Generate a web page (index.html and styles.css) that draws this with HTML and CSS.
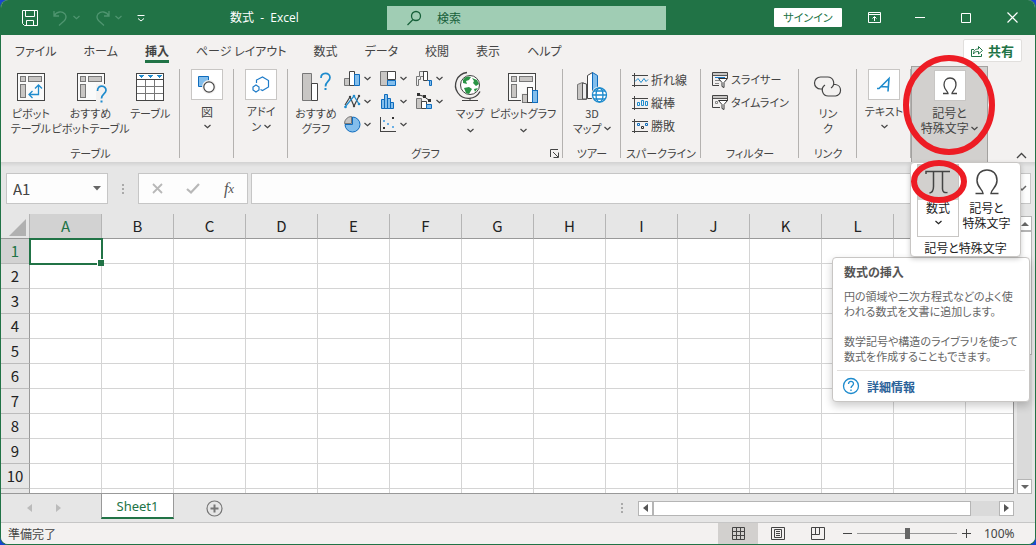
FILE: index.html
```html
<!DOCTYPE html>
<html lang="ja">
<head>
<meta charset="utf-8">
<title>数式 - Excel</title>
<link rel="stylesheet" href="styles.css">
</head>
<body>
<svg width="0" height="0" class="defs" aria-hidden="true">
  <symbol id="chev" viewBox="0 0 7 5"><path d="M.5 1l3 2.800L6.500 1" fill="none" stroke="currentColor" stroke-width="1.200"/></symbol>
</svg>
<div class="window">
  <header class="titlebar">
    <div class="quick">
      <button aria-label="保存"><svg width="16" height="16" fill="none" stroke="#fff"><path d="M.5.5h15v15h-13l-2-2zM3.500.5v6h9v-6M4.500 15.500v-5h7v5"/></svg></button>
      <button class="dim" aria-label="元に戻す"><svg width="15" height="16" fill="none" stroke="currentColor" stroke-width="1.300"><path d="M1 1v5h5M1 6c3-5 8-5 11-2 2 3 1 5-1 7l-5 4.500"/></svg><svg width="7" height="5"><use href="#chev"/></svg></button>
      <button class="dim" aria-label="やり直し"><svg width="15" height="16" fill="none" stroke="currentColor" stroke-width="1.300"><path d="M14 1v5H9M14 6C11 1 6 1 3 4 1 7 2 9 4 11l5 4.500"/></svg><svg width="7" height="5"><use href="#chev"/></svg></button>
      <button aria-label="カスタマイズ"><svg width="8" height="8" fill="none" stroke="#fff"><path d="M.5 1.500h7M1 4.500l3 2.500 3-2.500"/></svg></button>
    </div>
    <h1 class="doc">数式&nbsp; -&nbsp; Excel</h1>
    <label class="search"><svg width="15" height="16" fill="none" stroke="#17603a" stroke-width="1.300"><circle cx="9" cy="6" r="4.500"/><path d="M6 9.500L.5 15"/></svg><input type="text" placeholder="検索" aria-label="検索"></label>
    <div class="wincontrols">
      <button class="signin">サインイン</button>
      <button aria-label="リボンの表示"><svg width="13" height="11" fill="none" stroke="#fff"><path d="M.5.500h12v10H.5zM.5 2.500h12M6.500 9V5M4.500 6.500l2-2 2 2"/></svg></button>
      <button aria-label="最小化"><svg width="10" height="10" stroke="#fff"><path d="M0 4.500h10"/></svg></button>
      <button aria-label="最大化"><svg width="10" height="10" fill="none" stroke="#fff"><path d="M.5.500h9v9h-9z"/></svg></button>
      <button aria-label="閉じる"><svg width="11" height="11" stroke="#fff" stroke-width="1.200"><path d="M.5.500l10 10M10.500.500l-10 10"/></svg></button>
    </div>
  </header>

  <nav class="tabs">
    <button>ファイル</button><button>ホーム</button><button class="current">挿入</button><button>ページ レイアウト</button><button>数式</button><button>データ</button><button>校閲</button><button>表示</button><button>ヘルプ</button>
    <button class="share"><svg width="12" height="12" fill="none" stroke="#217346"><path d="M3 4.500H.5v7h10V9M2.500 9c0-4 2-5 5-5V1.500l4 4-4 3.500V6.500c-2.500 0-4 .5-5 2.500z"/></svg>共有</button>
  </nav>

  <section class="ribbon">
    <div class="group g-tables">
      <div class="items">
        <button class="big"><svg width="28" height="32"><g shape-rendering="crispEdges"><path d="M.5 2.500h27v27H.5z" fill="#fafafa" stroke="#444"/><path d="M3.500 5.500h5v5h-5zM11.500 5.500h13v5h-13zM3.500 13.500h5v13h-5z" fill="#c8c6c4" stroke="#777"/></g><path d="M12 23.500h9.500V14M15.500 20l-3.500 3.500 3.500 3.500M18 17.500l3.500-3.500 3.500 3.500" fill="none" stroke="#1e8bcd" stroke-width="1.300"/></svg><span>ピボット<br>テーブル</span></button>
        <button class="big"><svg width="32" height="32"><g shape-rendering="crispEdges"><path d="M2.500 2.500h27v27h-27z" fill="#fafafa" stroke="#444"/><path d="M5.500 5.500h5v5h-5zM13.500 5.500h13v5h-13zM5.500 13.500h5v13h-5z" fill="#c8c6c4" stroke="#777"/><path d="M21 13h11v19H21z" fill="#f3f1f0"/></g><path d="M22.500 20c0-7 9-6 8.500-.5-.3 3.500-4.500 3.500-4.500 8" fill="none" stroke="#1e8bcd" stroke-width="1.700"/><path d="M25.500 29.500h2v2h-2z" fill="#1e8bcd"/></svg><span>おすすめ<br>ピボットテーブル</span></button>
        <button class="big"><svg width="28" height="32" shape-rendering="crispEdges"><path d="M.5 2.500h27v27H.5z" fill="#fff" stroke="#444"/><path d="M1 8.500h26" stroke="#444"/><path d="M1 15.500h26M1 22.500h26M9.500 9v20M18.500 9v20" stroke="#777"/><path d="M2 4h6L5 7zM11 4h6l-3 3zM20 4h6l-3 3z" fill="#1e8bcd"/></svg><span>テーブル</span></button>
      </div>
      <h2>テーブル</h2>
    </div>
    <div class="group g-narrow"><button class="boxed"><span class="tile"><svg width="18" height="18"><path d="M.5.500h10v10H.5z" fill="#83beec" stroke="#0f6cbd"/><circle cx="11" cy="11" r="7" fill="#f3f1f0"/><circle cx="11" cy="11" r="5.200" fill="#fff" stroke="#444" stroke-width="1.200"/></svg></span><span>図</span><svg class="cv"><use href="#chev"/></svg></button></div>
    <div class="group g-narrow"><button class="boxed kana"><span class="tile"><svg width="18" height="18" fill="none" stroke="#1e7bc8" stroke-width="1.200"><path d="M4.500 7V4l6-3 6 3.500v6.500l-6 3.500-2-1"/><path d="M4 9l3 2v3l-3 2-3-2v-3z"/></svg></span><span>アドイ<br>ン <svg class="cv in"><use href="#chev"/></svg></span></button></div>

    <div class="group g-charts">
      <div class="items">
        <button class="big rec"><svg width="30" height="32"><path d="M1.500 2.500h9v27h-9z" fill="#c8c6c4" stroke="#777"/><path d="M10.500 12.500h6v17h-6z" fill="#fff" stroke="#444"/><path d="M20 7c0-6 9-6 9-.5 0 4-4.500 4-4.500 9" fill="none" stroke="#1e8bcd" stroke-width="1.700"/><path d="M23.500 17h2v2h-2z" fill="#1e8bcd"/></svg><span>おすすめ<br>グラフ</span></button>
        <div class="minis">
          <button aria-label="縦棒グラフ"><svg width="17" height="17"><path d="M.5 8.500h5v7h-5z" fill="#c8c6c4" stroke="#777"/><path d="M5.500 1.500h5v14h-5z" fill="#fff" stroke="#444"/><path d="M10.500 4.500h5v11h-5z" fill="#83beec" stroke="#0f6cbd"/></svg><svg class="cv"><use href="#chev"/></svg></button>
          <button aria-label="階層構造グラフ"><svg width="17" height="17"><path d="M.5 1.500h7v14h-7z" fill="#c8c6c4" stroke="#777"/><path d="M7.500 1.500h8v8h-8z" fill="#fff" stroke="#444"/><path d="M7.500 10.500h8v5h-8z" fill="#83beec" stroke="#0f6cbd"/></svg><svg class="cv"><use href="#chev"/></svg></button>
          <button aria-label="ウォーターフォール"><svg width="17" height="17"><path d="M2.500 15.500h-2v-9h3v-5h4v5h-3v3h-2z" fill="#eee" stroke="#777"/><path d="M7.500 1v5M7.500 1.500h4v9h-4z" fill="#fff" stroke="#444"/><path d="M11.500 10.500h4v5h-2v-5" fill="#83beec" stroke="#0f6cbd"/></svg><svg class="cv"><use href="#chev"/></svg></button>
          <button aria-label="折れ線グラフ"><svg width="17" height="17" fill="none"><path d="M1 12L6 4l4 9 5-10" stroke="#444" stroke-width="1.200"/><path d="M1 14l9-11 5 8" stroke="#1e8bcd" stroke-width="1.200"/><g fill="#1e8bcd"><circle cx="1.500" cy="14" r="1.300"/><circle cx="10" cy="3" r="1.300"/><circle cx="15" cy="11" r="1.300"/></g><g fill="#444"><circle cx="6" cy="4" r="1.200"/><circle cx="10" cy="13" r="1.200"/><circle cx="15" cy="3" r="1.200"/></g></svg><svg class="cv"><use href="#chev"/></svg></button>
          <button aria-label="統計グラフ"><svg width="17" height="17"><path d="M1.500 6.500h3v9h-3zM4.500 1.500h3v14h-3zM7.500 5.500h3v10h-3zM10.500 9.500h3v6h-3z" fill="#83beec" stroke="#0f6cbd"/></svg><svg class="cv"><use href="#chev"/></svg></button>
          <button aria-label="複合グラフ"><svg width="17" height="17"><path d="M.5 5.500h5v10h-5z" fill="#c8c6c4" stroke="#777"/><path d="M5.500 8.500h5v7h-5z" fill="#fff" stroke="#444"/><path d="M10.500 11.500h5v4h-5z" fill="#83beec" stroke="#0f6cbd"/><path d="M2 1.500l6 2 6 4.500" fill="none" stroke="#333"/><path d="M1 0h3v3H1zM7 2h3v3H7zM12 6h3v3h-3z" fill="#333"/></svg><svg class="cv"><use href="#chev"/></svg></button>
          <button aria-label="円グラフ"><svg width="17" height="17"><path d="M8.500 1a7.500 7.500 0 1 1-7.500 7.500h7.500z" fill="#83beec" stroke="#0f6cbd"/><path d="M7.500 7.500H.5a7 7 0 0 1 7-7z" fill="#c8c6c4" stroke="#777"/></svg><svg class="cv"><use href="#chev"/></svg></button>
          <button aria-label="散布図"><svg width="17" height="17"><path d="M.5 1v15M0 15.500h16" stroke="#444"/><path d="M12 1h2v2h-2zM3 11h2v2H3z" fill="#333"/><path d="M3 4h2v2H3zM7 7h2v2H7zM12 10h2v2h-2z" fill="#69afe5"/></svg><svg class="cv"><use href="#chev"/></svg></button>
        </div>
        <button class="big map"><svg width="28" height="32"><circle cx="14" cy="14" r="9.500" fill="#fff" stroke="#444"/><path d="M7 9c2-4 6-4 8-3l-2 3-3 1 1 3-4-1zM16 7l5 2 2 4-3 2-3-3 1-2zM8 17l5-1 3 2-3 5-3-1zM18 18l4-1-3 4z" fill="#2a9445"/><path d="M11 1.500a13 13 0 1 0 13 19" fill="none" stroke="#444" stroke-width="1.300"/><path d="M14 27v2.500M6 29.500h16" stroke="#444"/></svg><span>マップ</span><svg class="cv"><use href="#chev"/></svg></button>
        <button class="big pchart"><svg width="31" height="32" shape-rendering="crispEdges"><path d="M.5 2.500h27v27H.5z" fill="#fafafa" stroke="#444"/><path d="M3.500 5.500h5v5h-5zM11.500 5.500h13v5h-13zM3.500 13.500h5v13h-5z" fill="#c8c6c4" stroke="#777"/><path d="M13 22h5v-6h7v3h6v13H13z" fill="#f3f1f0"/><path d="M14.500 23.500h5v8h-5z" fill="#c8c6c4" stroke="#777"/><path d="M19.500 16.500h5v15h-5z" fill="#fff" stroke="#444"/><path d="M24.500 19.500h5v12h-5z" fill="#83beec" stroke="#0f6cbd"/></svg><span>ピボットグラフ</span><svg class="cv"><use href="#chev"/></svg></button>
      </div>
      <h2>グラフ</h2>
      <button class="launch" aria-label="グラフの詳細"><svg width="9" height="9" fill="none" stroke="#444"><path d="M.5 8V.5H8M3 3l5 5M8.500 3.500v5h-5"/></svg></button>
    </div>

    <div class="group g-tour"><div class="items"><button class="big"><svg width="32" height="32"><path d="M1.500 13.500l5-2 4 2v15H1.500z" fill="#c8c6c4" stroke="#777"/><path d="M6.500 12l4 1v15h-4z" fill="#eee" stroke="#555"/><path d="M11.500 4.500l5-3v26h-5z" fill="#fff" stroke="#444"/><path d="M16.500 1.500l5 3v14h-5z" fill="#83beec" stroke="#0f6cbd"/><circle cx="23.500" cy="24" r="8.500" fill="#f3f1f0"/><g fill="none" stroke="#1e8bcd" stroke-width="1.300"><circle cx="23.500" cy="24" r="7" fill="#fff"/><ellipse cx="23.500" cy="24" rx="3.500" ry="7"/><path d="M16.500 24h14M18 20h11M18 28h11"/></g></svg><span>3D<br>マップ <svg class="cv in"><use href="#chev"/></svg></span></button></div><h2>ツアー</h2></div>

    <div class="group g-spark"><div class="rows">
      <button><svg width="17" height="16" fill="none"><path d="M2.500 1v14M0 3.500h16M0 13.500h16" stroke="#444"/><path d="M3 9.500l3-3 3 4 3-4 2 3 2-2" stroke="#1e8bcd"/></svg>折れ線</button>
      <button><svg width="17" height="16" fill="none"><path d="M2.500 1v14M0 3.500h16M0 13.500h16" stroke="#444"/><path d="M5.500 7.500h2v3h-2zM9.500 5.500h2v5h-2zM13.500 6.500h2v4h-2z" stroke="#1e8bcd"/></svg>縦棒</button>
      <button><svg width="17" height="16" fill="none"><path d="M2.500 1v14M0 3.500h16M0 13.500h16" stroke="#444"/><path d="M5.500 5.500h2v2h-2zM13.500 5.500h2v2h-2z" stroke="#0f6cbd"/><path d="M9.500 8.500h2v2h-2z" stroke="#333"/></svg>勝敗</button>
    </div><h2>スパークライン</h2></div>

    <div class="group g-filter"><div class="rows kana">
      <button><svg width="17" height="17" fill="none"><path d="M7 14.500H.5v-13h15V7" stroke="#444"/><path d="M1 2h14v2H1z" fill="#c8c6c4"/><path d="M1 4.500h14" stroke="#555"/><path d="M3 6.500h10" stroke="#1e7bc8"/><path d="M3 9.500h5M3 12.500h4" stroke="#888"/><path d="M6.500 7.500h9l-3.500 4v5l-2-1v-4z" fill="#fff" stroke="#333"/></svg>スライサー</button>
      <button><svg width="17" height="17" fill="none"><path d="M8 13.500H.5v-12h15V7" stroke="#444"/><path d="M1 2h14v2H1z" fill="#c8c6c4"/><path d="M1 4.500h14" stroke="#555"/><path d="M3.500 7.500h2v2h-2z" stroke="#888"/><path d="M6.500 6.500h9l-3.500 4v5l-2-1v-4z" fill="#fff" stroke="#333"/></svg>タイムライン</button>
    </div><h2>フィルター</h2></div>

    <div class="group g-link"><div class="items"><button class="big link"><svg width="30" height="32" fill="none" stroke="#444" stroke-width="1.200"><path d="M10 18H7.500a6 6 0 0 1 0-12h7a6 6 0 0 1 3.500 11"/><path d="M20 13.500h2.500a5.800 5.800 0 0 1 0 11.500h-7a6 6 0 0 1-3.500-11"/></svg><span>リン<br>ク</span></button></div><h2>リンク</h2></div>
    <div class="group g-narrow"><button class="boxed kana"><span class="tile"><svg width="18" height="18" fill="none" stroke="#1e8bcd" stroke-width="1.600"><path d="M2 12.500h2L14 2.500l-1 13M6 10.500l7.500.5"/></svg></span><span>テキスト</span><svg class="cv"><use href="#chev"/></svg></button></div>

    <div class="group g-symbols">
      <button class="boxed"><span class="tile"><svg width="18" height="18" fill="none" stroke="#444" stroke-width="1.300"><path d="M2 16.500h5c0-2-4-4-4-8.500C3 3.500 5.500 1 9 1s6 2.500 6 7c0 4.500-4 6.500-4 8.500h5"/></svg></span><span>記号と<br>特殊文字 <svg class="cv in"><use href="#chev"/></svg></span></button>
      <svg class="ring ring-large" width="92" height="100"><ellipse cx="46" cy="50" rx="43" ry="47"/></svg>
      <div class="menu">
        <div class="choices">
          <button class="formula"><svg width="30" height="28" fill="none" stroke="#444" stroke-width="1.500"><path d="M3 7V4.500h24M10.500 4.500v15c0 4-1 6-4 6.500M19.500 4.500V22c0 3 2 4 5 3.500"/></svg><span>数式</span><svg class="cv"><use href="#chev"/></svg></button>
          <button><svg width="30" height="28" fill="none" stroke="#444" stroke-width="1.500"><path d="M3.500 26.500H11c0-4-6-6-6-13C5 7 9 3 15 3s10 4 10 10.500c0 7-6 9-6 13h7.500"/></svg><span>記号と<br>特殊文字</span></button>
        </div>
        <h2>記号と特殊文字</h2>
        <svg class="ring ring-small" width="56" height="43"><ellipse cx="28" cy="21.500" rx="25" ry="18.500"/></svg>
      </div>
      <aside class="tip">
        <h3>数式の挿入</h3>
        <p>円の領域や二次方程式などのよく使<br>われる数式を文書に追加します。</p>
        <p>数学記号や構造のライブラリを使って<br>数式を作成することもできます。</p>
        <a href="#more"><svg width="18" height="18" fill="none" stroke="#1e8bcd" stroke-width="1.300"><circle cx="9" cy="9" r="7.500"/><path d="M6.500 7c0-3.500 5-3.500 5-.3 0 2-2.500 2-2.500 4.300M9 12.500V14"/></svg>詳細情報</a>
      </aside>
    </div>
    <button class="collapse" aria-label="リボンを折りたたむ"><svg width="11" height="7" fill="none" stroke="#444" stroke-width="1.300"><path d="M1 6l4.500-4.500L10 6"/></svg></button>
  </section>

  <section class="formulabar">
    <div class="namebox"><input type="text" value="A1" aria-label="名前ボックス"><button aria-label="名前の一覧"><svg width="8" height="5"><path d="M0 0h8L4 4.500z" fill="#666"/></svg></button></div>
    <span class="grip"></span>
    <div class="fx">
      <button aria-label="キャンセル"><svg width="11" height="11" stroke="#b8b8b8" stroke-width="1.800"><path d="M1 1l9 9M10 1l-9 9"/></svg></button>
      <button aria-label="入力"><svg width="14" height="11" fill="none" stroke="#b8b8b8" stroke-width="2.200"><path d="M1 6l4 3.500L13 1"/></svg></button>
      <button class="fn" aria-label="関数の挿入">f<sub>x</sub></button>
    </div>
    <div class="entry"><input type="text" aria-label="数式バー"><button aria-label="展開"><svg width="10" height="7" fill="none" stroke="#666" stroke-width="1.500"><path d="M1 1l4 4 4-4"/></svg></button></div>
  </section>

  <main class="sheet">
    <div class="gridwrap">
      <table class="grid">
        <colgroup><col class="rh"><col span="14" class="cell"></colgroup>
        <thead><tr><th class="corner"><svg width="17" height="17"><path d="M17 0v17H0z" fill="#b1b1b1"/></svg></th><th class="sel">A</th><th>B</th><th>C</th><th>D</th><th>E</th><th>F</th><th>G</th><th>H</th><th>I</th><th>J</th><th>K</th><th>L</th><th>M</th><th>N</th></tr></thead>
        <tbody>
          <tr><th class="sel">1<td class="active"><td><td><td><td><td><td><td><td><td><td><td><td><td></tr>
          <tr><th>2<td><td><td><td><td><td><td><td><td><td><td><td><td><td></tr>
          <tr><th>3<td><td><td><td><td><td><td><td><td><td><td><td><td><td></tr>
          <tr><th>4<td><td><td><td><td><td><td><td><td><td><td><td><td><td></tr>
          <tr><th>5<td><td><td><td><td><td><td><td><td><td><td><td><td><td></tr>
          <tr><th>6<td><td><td><td><td><td><td><td><td><td><td><td><td><td></tr>
          <tr><th>7<td><td><td><td><td><td><td><td><td><td><td><td><td><td></tr>
          <tr><th>8<td><td><td><td><td><td><td><td><td><td><td><td><td><td></tr>
          <tr><th>9<td><td><td><td><td><td><td><td><td><td><td><td><td><td></tr>
          <tr><th>10<td><td><td><td><td><td><td><td><td><td><td><td><td><td></tr>
          <tr><th><td><td><td><td><td><td><td><td><td><td><td><td><td><td></tr>
        </tbody>
      </table>
    </div>
    <div class="vscroll">
      <button aria-label="上へ"><svg width="8" height="4"><path d="M0 4h8L4 0z" fill="#666"/></svg></button>
      <div class="track"><div class="thumb"></div></div>
      <button aria-label="下へ"><svg width="8" height="4"><path d="M0 0h8L4 4z" fill="#666"/></svg></button>
    </div>
  </main>

  <div class="sheetbar">
    <div class="navs"><button aria-label="前のシート"><svg width="5" height="8"><path d="M5 0v8L0 4z" fill="#bbb"/></svg></button><button aria-label="次のシート"><svg width="5" height="8"><path d="M0 0v8l5-4z" fill="#bbb"/></svg></button></div>
    <button class="sheettab">Sheet1</button>
    <button class="add" aria-label="新しいシート"><svg width="17" height="17" fill="none" stroke="#777"><circle cx="8.500" cy="8.500" r="7.500" stroke-width="1.200"/><path d="M4.500 8.500h8M8.500 4.500v8" stroke-width="2"/></svg></button>
    <span class="grip"></span>
    <div class="hscroll">
      <button aria-label="左へ"><svg width="5" height="8"><path d="M5 0v8L0 4z" fill="#555"/></svg></button>
      <div class="track"><div class="thumb"></div></div>
      <button aria-label="右へ"><svg width="5" height="8"><path d="M0 0v8l5-4z" fill="#555"/></svg></button>
    </div>
  </div>

  <footer class="status">
    <span class="ready">準備完了</span>
    <button class="view on" aria-label="標準"><svg width="13" height="13" fill="none" stroke="#444"><path d="M.5.500h12v12H.5zM.5 4.500h12M.5 8.500h12M4.500.5v12M8.500.5v12"/></svg></button>
    <button class="view" aria-label="ページ レイアウト表示"><svg width="14" height="13" fill="none" stroke="#444"><path d="M.5.500h13v12H.5zM3.500 2.500h7v8h-7zM5 4.500h4M5 6.500h4M5 8.500h4"/></svg></button>
    <button class="view" aria-label="改ページ プレビュー"><svg width="14" height="13" fill="none" stroke="#444"><path d="M.5.500h13v12H.5zM.5 7.500h8v-7M4.500.5v7"/></svg></button>
    <button class="zoom" aria-label="縮小"><svg width="9" height="9" stroke="#444"><path d="M0 4.500h9"/></svg></button>
    <input class="slider" type="range" min="0" max="100" value="50" aria-label="ズーム">
    <button class="zoom" aria-label="拡大"><svg width="9" height="9" stroke="#444"><path d="M0 4.500h9M4.500 0v9"/></svg></button>
    <span class="percent">100%</span>
  </footer>
</div>
</body>
</html>
```
FILE: styles.css
```css
* { box-sizing: border-box; }
body {
  margin: 0;
  background: #1746d1;
  color: #444;
  font: 12px/15px "Noto Sans CJK JP", sans-serif;
  font-feature-settings: "palt";
}
button, input {
  margin: 0; padding: 0; border: 0; background: none; color: inherit;
  font: inherit; font-feature-settings: inherit; outline: 0; min-width: 0;
}
button { display: flex; align-items: center; justify-content: center; white-space: nowrap; }
h1, h2, h3, p { margin: 0; font-size: 12px; font-weight: 400; }
svg { display: block; flex: none; overflow: visible; }
.defs { position: absolute; }
.cv { width: 7px; height: 5px; }
.cv.in { display: inline-block; vertical-align: 2px; }

.window {
  display: flex; flex-direction: column; height: 100vh; overflow: hidden;
  border: 1px solid #217346; border-top: 0; border-radius: 8px; background: #e6e6e6;
}

.titlebar { display: flex; align-items: center; height: 35px; flex: none; background: #217346; color: #fff; }
.quick { display: flex; align-items: center; gap: 15px; width: 229px; padding-left: 21px; }
.quick button { gap: 5px; }
.quick .dim { color: #4f9570; }
.doc { width: 157px; font-family: "Open Sans", "Noto Sans CJK JP", sans-serif; }
.search { display: flex; align-items: center; gap: 15px; flex: 0 1 279px; height: 24px; padding-left: 20px; background: #a0cdb4; }
.search input { flex: 1; }
.search input::placeholder { color: #17603a; opacity: 1; }
.wincontrols { display: flex; align-items: center; margin-left: auto; }
.wincontrols button { width: 46px; height: 35px; }
.wincontrols .signin { width: 68px; height: 19px; margin-right: 9px; background: #fff; color: #217346; border-radius: 1px; font-size: 11px; }

.tabs { display: flex; align-items: center; gap: 27px; height: 31px; flex: none; padding: 0 13px 0 14px; background: #f3f1f0; }
.tabs button { height: 25px; border-top: 3px solid transparent; border-bottom: 3px solid transparent; }
.tabs .current { border-bottom-color: #217346; font-weight: 700; }
.tabs .share { gap: 5px; width: 59px; height: 23px; margin-left: auto; border: 1px solid #e1dfdd; border-radius: 2px; background: #fff; color: #217346; font-size: 13px; font-weight: 700; }

.ribbon { position: relative; z-index: 2; display: flex; height: 96px; flex: none; background: #f3f1f0; }
.group {
  position: relative; display: flex; flex-direction: column; flex: none; justify-content: space-between;
  background: linear-gradient(#b4b2b0, #b4b2b0) right 3px / 1px 89px no-repeat;
}
.group h2 { text-align: center; padding-bottom: 1px; font-size: 11px; }
.kana { font-size: 11px; }
.items { display: flex; align-items: flex-start; }
.big { flex-direction: column; justify-content: flex-start; width: 60px; padding-top: 5px; font-size: 11px; }
.big > span { padding-top: 3px; }
.big > .cv { margin-top: 7px; }
.boxed { flex-direction: column; justify-content: flex-start; padding-top: 3px; }
.boxed > span:nth-child(2) { padding-top: 4px; }
.boxed > .cv { margin-top: 5px; }
.tile { display: grid; place-items: center; width: 32px; height: 31px; border: 1px solid #c8c6c4; background: #fff; }
.g-tables { width: 179px; }
.g-narrow { width: 54px; }
.g-charts { width: 275px; }
.g-tour { width: 58px; }
.g-spark { width: 80px; }
.g-filter { width: 98px; }
.g-link { width: 58px; }
.g-symbols { width: 77px; background: #d2d0ce; border: 1px solid #a3a19f; border-bottom: 0; }
.rec { width: 56px; }
.minis { display: grid; grid-template-columns: repeat(3, 36px); grid-auto-rows: 23px; padding-top: 1px; }
.minis button { justify-content: flex-start; gap: 3px; }
.map { width: 36px; }
.pchart { width: 70px; }
.big.link { width: 58px; }
.launch { position: absolute; right: 4px; bottom: 4px; }
.rows { display: flex; flex-direction: column; align-items: flex-start; padding: 2px 0 0 11px; }
.rows button { gap: 2px; height: 23px; }
.collapse { position: absolute; right: 8px; bottom: 3px; }

.ring { position: absolute; fill: none; stroke: #ed1c24; stroke-width: 6px; pointer-events: none; }
.ring-large { left: -9px; top: -12px; z-index: 3; }
.ring-small { left: 0; top: -3px; }
.menu { position: absolute; left: -2px; top: 95px; z-index: 2; width: 111px; border: 1px solid #c8c6c4; border-radius: 4px; background: #fff; color: #222; box-shadow: 0 2px 5px #0003; }
.menu h2 { padding: 3px 0 1px; font-size: 12px; }
.choices { display: flex; align-items: stretch; padding: 1px 6px 0; }
.choices button { flex-direction: column; justify-content: flex-start; flex: 1; height: 73px; padding-top: 3px; }
.choices button span { padding-top: 5px; }
.choices .cv { margin-top: 5px; }
.choices .formula { flex: 0 0 42px; padding-top: 2px; border: 1px solid #c8c6c4; background: linear-gradient(#d2d0ce 35px, #fff 35px); }
.tip { position: absolute; right: -43px; top: 190px; width: 198px; z-index: 1; padding: 6px 4px 5px; border: 1px solid #c8c6c4; border-radius: 4px; background: #fff; color: #666; box-shadow: 0 4px 8px #0003; white-space: nowrap; }
.tip h3 { padding: 0 0 10px 7px; color: #555; font-weight: 700; }
.tip p { padding: 0 0 15px 7px; font-size: 11px; }
.tip p + p { padding-bottom: 6px; }
.tip a { display: flex; align-items: center; gap: 7px; padding: 6px 5px 1px; border-top: 1px solid #e1dfdd; color: #2b6299; font-weight: 700; text-decoration: none; }

.formulabar { display: flex; flex: none; height: 52px; padding: 11px 4px 10px 5px; background: linear-gradient(#d2d2d2, #e6e6e6 5px); }
.namebox, .fx, .entry { display: flex; border: 1px solid #c6c6c6; background: #fdfdfd; }
.namebox { width: 102px; font-size: 15px; }
.namebox input { flex: 1; padding-left: 6px; }
.namebox button { width: 20px; }
.grip { align-self: center; width: 2px; height: 10px; margin: 0 14px; background: repeating-linear-gradient(#aaa 0 2px, transparent 2px 4px); }
.fx { width: 110px; margin-right: 3px; }
.fx button { flex: 1; }
.fx .fn { color: #555; font: italic 16px/20px "Liberation Serif", serif; }
.fn sub { font-size: 13px; vertical-align: -1px; line-height: 0; }
.entry { flex: 1; }
.entry input { flex: 1; padding-left: 6px; }
.entry button { width: 16px; }

.sheet { display: flex; flex: 1; min-height: 0; padding-right: 3px; }
.gridwrap { flex: 1; min-width: 0; overflow: hidden; border-right: 1px solid #999; border-bottom: 1px solid #999; }
.grid { width: 1037px; table-layout: fixed; border-spacing: 0; border-collapse: separate; color: #222; font-size: 15px; line-height: 20px; }
.rh { width: 29px; }
.cell { width: 72px; }
.grid th, .grid td { height: 25px; padding: 0; }
.grid th { font-weight: 400; background: #e6e6e6; border-right: 1px solid #999; border-bottom: 1px solid #bbb; }
.grid thead th { border-right-color: #b5b5b5; border-bottom-color: #999; }
.grid td { background: #fff; border-right: 1px solid #d4d4d4; border-bottom: 1px solid #d4d4d4; }
.grid .sel { background: #d2d2d2; color: #217346; }
.grid .corner svg { margin-left: 8px; margin-top: 3px; }
.grid .active { position: relative; outline: 2px solid #217346; outline-offset: -1px; }
.active::after { content: ""; position: absolute; right: -3px; bottom: -3px; width: 6px; height: 6px; border: solid #fff; border-width: 1px 0 0 1px; background: #217346; }
.vscroll { display: flex; flex-direction: column; width: 18px; padding: 2px 0 0 3px; }
.vscroll button, .hscroll button { flex: 0 0 15px; border: 1px solid #b5b5b5; background: #fff; }
.vscroll .track { flex: 1; background: #dadada; }
.vscroll .thumb { height: 50%; border: 1px solid #b5b5b5; background: #fff; }

.sheetbar { display: flex; align-items: center; flex: none; height: 28px; padding-right: 21px; }
.navs { display: flex; gap: 24px; width: 100px; padding-left: 26px; }
.sheettab { align-self: flex-start; width: 73px; height: 25px; border: 1px solid #999; border-width: 0 1px 2px; border-bottom-color: #217346; background: #fff; color: #217346; font: 13px "Noto Sans", sans-serif; }
.add { margin-left: 32px; }
.sheetbar .grip { margin-left: auto; margin-right: 15px; }
.hscroll { display: flex; flex: 0 1 376px; height: 15px; }
.hscroll .track { flex: 1; background: #dadada; }
.hscroll .thumb { width: 92%; height: 15px; border: 1px solid #b5b5b5; background: #fff; }

.status { display: flex; align-items: center; flex: none; height: 22px; padding-right: 18px; background: #f3f1f0; border-top: 1px solid #c6c6c6; }
.ready { margin: 0 auto 0 7px; }
.view { width: 40px; height: 21px; }
.view.on { background: #d2d0ce; }
.zoom { width: 19px; height: 20px; }
.slider { appearance: none; width: 100px; height: 12px; background: linear-gradient(#999, #999) center / 100% 1px no-repeat; }
.slider::-webkit-slider-thumb { appearance: none; width: 5px; height: 11px; background: #666; }
.percent { width: 33px; margin-left: 8px; font: 12px/15px "Noto Sans", sans-serif; }
```
